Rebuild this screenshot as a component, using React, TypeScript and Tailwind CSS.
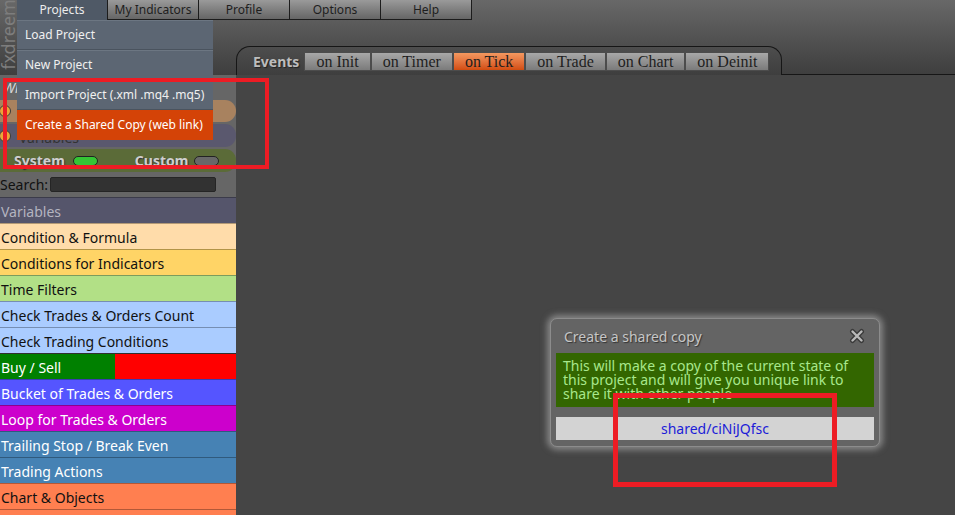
import React from "react";

const menu = ["Projects", "My Indicators", "Profile", "Options", "Help"];

const dropdown = [
  "Load Project",
  "New Project",
  "Import Project (.xml .mq4 .mq5)",
];

const tabs = ["on Init", "on Timer", "on Tick", "on Trade", "on Chart", "on Deinit"];

const blocks = [
  { label: "Variables", cls: "bg-[#55556b] text-[#b4b4c0]" },
  { label: "Condition & Formula", cls: "bg-[#ffdcaa] text-[#111]" },
  { label: "Conditions for Indicators", cls: "bg-[#ffd466] text-[#111]" },
  { label: "Time Filters", cls: "bg-[#b2e086] text-[#111]" },
  { label: "Check Trades & Orders Count", cls: "bg-[#aaccff] text-[#111]" },
  { label: "Check Trading Conditions", cls: "bg-[#aaccff] text-[#111]" },
  { label: "Buy / Sell", cls: "split" },
  { label: "Bucket of Trades & Orders", cls: "bg-[#5555ff] text-white" },
  { label: "Loop for Trades & Orders", cls: "bg-[#cc00cc] text-white" },
  { label: "Trailing Stop / Break Even", cls: "bg-[#4682b4] text-white" },
  { label: "Trading Actions", cls: "bg-[#4682b4] text-white" },
  { label: "Chart & Objects", cls: "bg-[#ff7f50] text-[#111]" },
  { label: "Other", cls: "bg-[#ff7f50] text-[#111]" },
];

function CloseIcon() {
  return (
    <svg width="16" height="16" viewBox="0 0 16 16">
      <path d="M3.5 3.5 L12.5 12.5 M12.5 3.5 L3.5 12.5" stroke="#3a3a3a" strokeWidth="5" strokeLinecap="round" />
      <path d="M3.5 3.5 L12.5 12.5 M12.5 3.5 L3.5 12.5" stroke="#b9b9b9" strokeWidth="2.4" strokeLinecap="round" />
    </svg>
  );
}

export default function App() {
  return (
    <div className="relative w-[955px] h-[515px] overflow-hidden bg-[#454545] font-['Noto_Sans',sans-serif]">
      {/* header */}
      <div className="flex h-[75px] bg-linear-to-b from-[#686868] to-[#3e3e3e]">
        <div className="w-[17px] h-full overflow-hidden flex flex-col justify-end items-center pb-[5px]">
          <span className="shrink-0 [writing-mode:vertical-rl] rotate-180 text-[18px] leading-[17px] text-[#7d7d7d] whitespace-nowrap">
            fxdreema
          </span>
        </div>
        <div className="flex-1 flex flex-col">
          <div className="flex h-[20px]">
            {menu.map((m, i) => (
              <div
                key={m}
                className={
                  "w-[91px] flex items-center justify-center text-[12px] leading-none border-r border-[#1c1c1c] " +
                  (i === 0
                    ? "bg-[#4f5966] text-[#ececec]"
                    : "border-b bg-linear-to-b from-[#9a9a9a] to-[#666] text-[#1e1e1e]")
                }
              >
                {m}
              </div>
            ))}
          </div>
          <div className="flex flex-1 items-end">
            <div className="w-[219px]" />
            <div className="w-[546px] h-[29px] border border-b-0 border-[#161616] rounded-t-[14px] flex items-start pt-[5px] pl-[16px]">
              <span className="mr-[5px] text-[14px] leading-[19px] font-bold text-[#bdbdbd] [text-shadow:1px_1px_1px_#222]">
                Events
              </span>
              <div className="flex">
                {tabs.map((t) => (
                  <div
                    key={t}
                    className={
                      "h-[19px] px-[11px] border border-[#4c4c4c] whitespace-nowrap font-['Liberation_Serif',serif] text-[16px] leading-[17px] text-[#1e1e1e] " +
                      (t === "on Tick"
                        ? "bg-linear-to-b from-[#f4985f] to-[#d24c0e]"
                        : "bg-linear-to-b from-[#a8a8a8] to-[#7b7b7b]")
                    }
                  >
                    {t}
                  </div>
                ))}
              </div>
            </div>
            <div className="flex-1 h-full border-b border-[#161616]" />
          </div>
        </div>
      </div>

      {/* body */}
      <div className="flex h-[440px]">
        <div className="w-[236px] flex flex-col">
          <div className="h-[123px] bg-[#666] flex flex-col">
            <div className="h-[25px] flex items-center pl-[3px] italic text-[14px] text-[#d6d6d6]">
              Wizard
            </div>
            <div className="h-[22px] bg-[#a8825f] rounded-r-[11px] flex items-center">
              <span className="-ml-px w-[12px] h-[12px] rounded-full bg-[#eaa53a] border border-[#3a3a3a]" />
            </div>
            <div className="mt-[2px] h-[23px] bg-[#5a586e] rounded-r-[11px] flex items-center">
              <span className="-ml-px w-[12px] h-[12px] rounded-full bg-[#eaa53a] border border-[#3a3a3a]" />
              <span className="ml-[8px] mt-[4px] text-[14px] text-[#333]">Variables</span>
            </div>
            <div className="mt-[2px] h-[23px] bg-[#5b6b38] rounded-r-[11px] flex items-center pl-[14px]">
              <span className="text-[14px] font-bold text-[#cfcfcf] [text-shadow:1px_1px_1px_#333]">System</span>
              <span className="ml-[8px] w-[25px] h-[10px] rounded-full bg-[#35c535] border border-[#222]" />
              <span className="ml-[37px] text-[14px] font-bold text-[#cfcfcf] [text-shadow:1px_1px_1px_#333]">Custom</span>
              <span className="ml-[6px] w-[25px] h-[10px] rounded-full bg-[#686868] border border-[#222]" />
            </div>
            <div className="h-[25px] flex items-center">
              <span className="text-[14px] text-[#111]">Search:</span>
              <span className="ml-[2px] w-[166px] h-[15px] bg-[#323232] border border-[#252525] rounded-[2px]" />
            </div>
          </div>
          {blocks.map((b) =>
            b.cls === "split" ? (
              <div key={b.label} className="h-[26px] shrink-0 border-t border-black/30 flex">
                <div className="w-[115px] bg-[#008000] text-white text-[14px] flex items-center pl-[1px] pt-px">{b.label}</div>
                <div className="flex-1 bg-[#ff0000]" />
              </div>
            ) : (
              <div
                key={b.label}
                className={"h-[26px] shrink-0 border-t border-black/30 flex items-center pl-[1px] pt-px text-[14px] " + b.cls}
              >
                {b.label}
              </div>
            )
          )}
        </div>
        <div className="flex-1" />
      </div>

      {/* projects dropdown */}
      <div className="absolute left-[17px] top-[20px] w-[196px] bg-[#5c6673] text-[12px] text-[#f0f0f0]">
        {dropdown.map((d) => (
          <div key={d} className="h-[30px] flex items-center pl-[8px] border-b border-[#4a535e] border-t border-t-[#6c7682]">
            {d}
          </div>
        ))}
        <div className="h-[30px] flex items-center pl-[8px] bg-[#d44307] text-white">
          Create a Shared Copy (web link)
        </div>
      </div>

      {/* shared copy dialog */}
      <div className="absolute left-[550px] top-[318px] w-[330px] h-[129px] rounded-[7px] border border-[#8c8c8c] bg-[#646464] px-[5px] shadow-[0_0_6px_3px_rgba(190,190,190,0.55)]">
        <div className="h-[34px] flex items-center justify-between pl-[8px] pr-[9px]">
          <span className="text-[14px] text-[#c6c6c6] [text-shadow:1px_1px_1px_#333]">Create a shared copy</span>
          <CloseIcon />
        </div>
        <div className="h-[54px] bg-[#336600] px-[7px] pt-[6px] text-[14px] leading-[14px] text-[#a8e88c]">
          This will make a copy of the current state of<br />
          this project and will give you unique link to<br />
          share it with other people
        </div>
        <div className="mt-[10px] h-[23px] bg-[#d3d3d3] flex items-center justify-center text-[14px] text-[#1c1cd8]">
          shared/ciNiJQfsc
        </div>
      </div>

      {/* annotation frames */}
      <div className="absolute left-[3px] top-[78px] w-[266px] h-[91px] border-[4px] border-[#ed1c24]" />
      <div className="absolute left-[613px] top-[393px] w-[224px] h-[94px] border-[5px] border-[#ed1c24]" />
    </div>
  );
}
